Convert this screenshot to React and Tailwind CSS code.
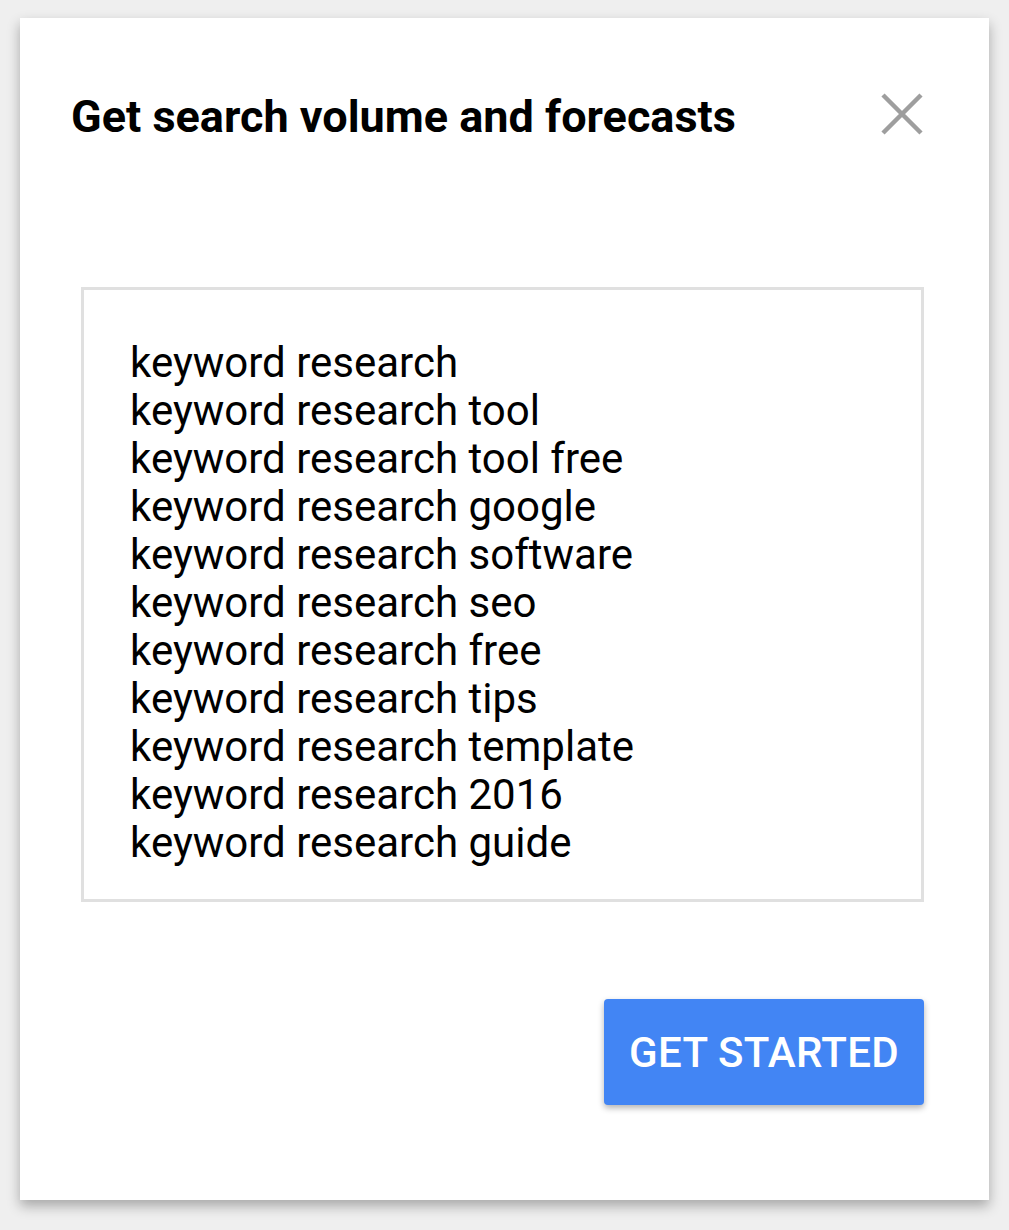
export default function App() {
  const items = [
    "keyword research",
    "keyword research tool",
    "keyword research tool free",
    "keyword research google",
    "keyword research software",
    "keyword research seo",
    "keyword research free",
    "keyword research tips",
    "keyword research template",
    "keyword research 2016",
    "keyword research guide",
  ];
  return (
    <div className="w-[1009px] h-[1230px] bg-[#efefef] pt-[18px] pl-[20px] overflow-hidden" style={{ fontFamily: "Roboto, 'Liberation Sans', sans-serif" }}>
      <div className="w-[969px] h-[1182px] bg-white shadow-[0_6px_12px_rgba(0,0,0,0.3)] flex flex-col">
        <div className="flex items-start justify-between pl-[51px] pr-[66px] pt-[71px]">
          <h1 className="text-[45px] leading-[56px] font-bold text-black">Get search volume and forecasts</h1>
          <svg width="42" height="42" viewBox="0 0 42 42" className="mt-[4px]" aria-label="close">
            <path d="M2 2 L40 40 M40 2 L2 40" stroke="#9e9e9e" strokeWidth="4.5" fill="none" />
          </svg>
        </div>
        <div className="ml-[61px] mt-[142px] w-[843px] h-[615px] border-[3px] border-[#e0e0e0] pl-[46px] pt-[49px]">
          {items.map((t) => (
            <div key={t} className="text-[42px] leading-[48px] text-black">{t}</div>
          ))}
        </div>
        <div className="flex justify-end pr-[65px] mt-[97px]">
          <button className="w-[320px] h-[106px] rounded-[4px] bg-[#4285f4] text-white text-[42px] font-medium tracking-[0.3px] shadow-[0_3px_6px_rgba(0,0,0,0.3)]">GET STARTED</button>
        </div>
      </div>
    </div>
  );
}
